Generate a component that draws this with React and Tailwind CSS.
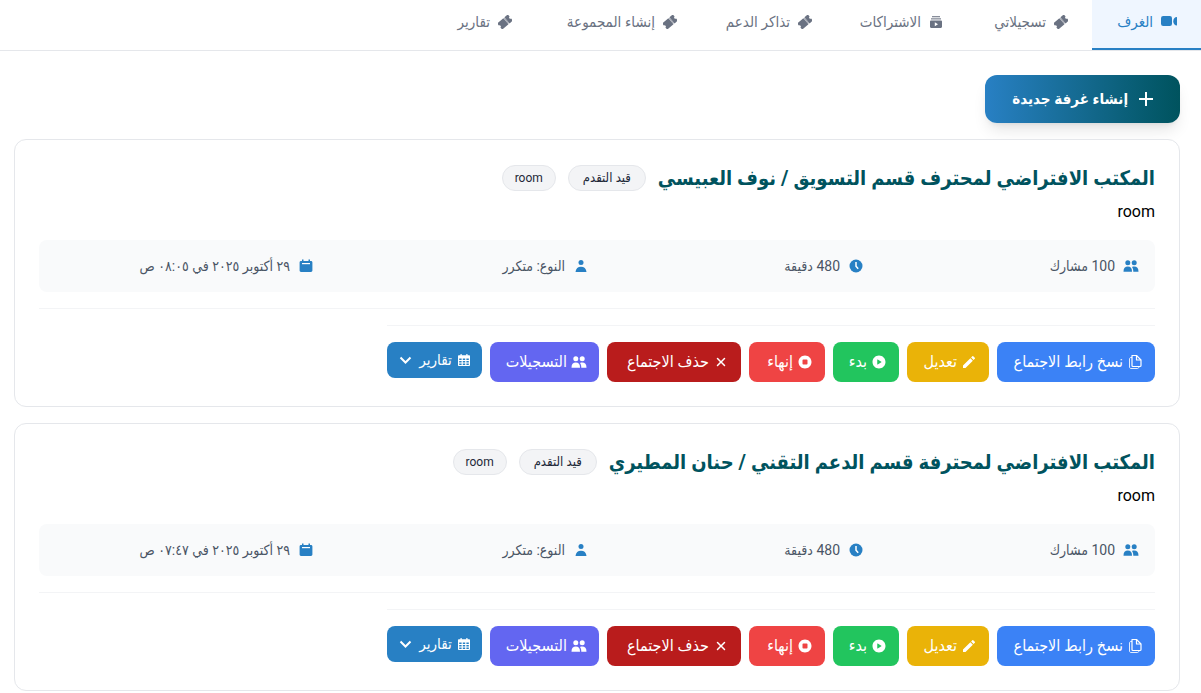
import { IoClose, IoPlayCircle, IoStopCircle } from 'react-icons/io5';
import { MdEdit } from 'react-icons/md';

const VideoIcon = ({ className }) => (
  <svg viewBox="0 0 16 16" fill="currentColor" className={className}>
    <rect x="0" y="2" width="11" height="10" rx="2.2" />
    <path d="M16 3v8.500c-2.400 0-3.700-1.600-3.700-4.200S13.600 3 16 3z" />
  </svg>
);

const TicketIcon = ({ className }) => (
  <svg viewBox="0 0 14 14" fill="currentColor" className={className}>
    <g transform="rotate(-40 7 7)">
      <path d="M0 3h8.200v8H0V8.200a1.200 1.200 0 0 0 0-2.400z" />
      <path d="M8.200 3.600h1.400v6.800H8.200z" opacity="0.6" />
      <path d="M9.600 3H14v2.800a1.200 1.200 0 0 0 0 2.400V11H9.600z" />
    </g>
  </svg>
);

const SubscriptionsIcon = ({ className }) => (
  <svg viewBox="0 0 14 14" fill="currentColor" className={className}>
    <rect x="3" y="1" width="8" height="1.300" opacity="0.8" />
    <rect x="2" y="3.200" width="10" height="1.300" opacity="0.8" />
    <path fillRule="evenodd" d="M2.200 5.400h9.600c.7 0 1.200.5 1.200 1.200v5.200c0 .7-.5 1.200-1.200 1.200H2.200C1.500 13 1 12.500 1 11.800V6.600c0-.7.5-1.200 1.200-1.200zM5.800 7.200v4L9 9.200z" />
  </svg>
);

const ClockIcon = ({ className }) => (
  <svg viewBox="0 0 16 16" className={className}>
    <circle cx="8" cy="8" r="6.500" fill="currentColor" />
    <path d="M8 4v4.200l2.200 2.600" fill="none" stroke="white" strokeWidth="1.500" />
  </svg>
);

const PeopleIcon = ({ className }) => (
  <svg viewBox="0 0 16 16" fill="currentColor" className={className}>
    <circle cx="4.800" cy="4.800" r="2.500" />
    <circle cx="11.200" cy="4.800" r="2.500" />
    <path d="M.5 13.700c0-3.600 1.500-5.200 4.300-5.200s4.200 1.600 4.200 5.200z" />
    <path d="M9 9c.6-.4 1.400-.5 2.200-.5 2.800 0 4.300 1.600 4.300 5.200h-5.200c0-1.900-.4-3.500-1.300-4.700z" />
  </svg>
);

const PersonIcon = ({ className }) => (
  <svg viewBox="0 0 16 16" fill="currentColor" className={className}>
    <circle cx="8" cy="4.500" r="2.500" />
    <path d="M2.500 14c.3-3.500 2.400-5.200 5.500-5.200s5.200 1.700 5.500 5.200z" />
  </svg>
);

const DateIcon = ({ className }) => (
  <svg viewBox="0 0 16 16" className={className}>
    <path d="M3 3h1V1.500h1.500V3h5V1.500H12V3h1c.8 0 1.400.6 1.400 1.400v8.200c0 .8-.6 1.400-1.400 1.400H3c-.8 0-1.400-.6-1.400-1.400V4.400C1.600 3.600 2.200 3 3 3z" fill="currentColor" />
    <rect x="4" y="5" width="8" height="1.200" fill="white" />
  </svg>
);

const CopyIcon = ({ className }) => (
  <svg viewBox="0 0 16 16" fill="none" stroke="currentColor" strokeLinejoin="round" className={className}>
    <path d="M5 1.500h4.500L14 6v5.500c0 .6-.4 1-1 1H6c-.6 0-1-.4-1-1z" strokeWidth="1.200" />
    <path d="M9.500 1.500V6H14" strokeWidth="1.200" />
    <path d="M5 3.500H4c-.8 0-1.500.6-1.500 1.400v8.200c0 .8.700 1.400 1.500 1.400h6.500c.8 0 1.300-.6 1.500-1.800" strokeWidth="1" opacity="0.85" />
  </svg>
);

const CalendarIcon = ({ className }) => (
  <svg viewBox="0 0 12 12" fill="currentColor" className={className}>
    <path fillRule="evenodd" d="M1 1.200h1.500V0h1.200v1.200h4.600V0h1.200v1.200H11c.6 0 1 .4 1 1V11c0 .6-.4 1-1 1H1c-.6 0-1-.4-1-1V2.200c0-.6.4-1 1-1zM1.200 4.400v1.500h2.400V4.400zm3.600 0v1.500h2.400V4.400zm3.600 0v1.500h2.400V4.400zM1.200 6.900v1.500h2.400V6.900zm3.600 0v1.500h2.400V6.900zm3.600 0v1.500h2.400V6.900zM1.200 9.400v1.500h2.400V9.400zm3.600 0v1.500h2.400V9.400zm3.600 0v1.500h2.400V9.400z" />
  </svg>
);

const PlusIcon = ({ className }) => (
  <svg viewBox="0 0 20 20" fill="none" stroke="currentColor" strokeWidth="2" className={className}>
    <path d="M10 3v14M3 10h14" />
  </svg>
);

const ChevronIcon = ({ className }) => (
  <svg viewBox="0 0 14 14" fill="none" stroke="currentColor" strokeWidth="2" className={className}>
    <path d="M1.500 4.500l5 5 5-5" />
  </svg>
);

const tabs = [
  { label: 'الغرف', icon: VideoIcon, width: 'w-[109px]', active: true },
  { label: 'تسجيلاتي', icon: TicketIcon, width: 'w-[125px]' },
  { label: 'الاشتراكات', icon: SubscriptionsIcon, width: 'w-[131px]' },
  { label: 'تذاكر الدعم', icon: TicketIcon, width: 'w-[135px]' },
  { label: 'إنشاء المجموعة', icon: TicketIcon, width: 'w-[165px]' },
  { label: 'تقارير', icon: TicketIcon, width: 'w-[100px]' },
];

const rooms = [
  { id: 1, title: 'المكتب الافتراضي لمحترف قسم التسويق / نوف العبيسي', date: '٢٩ أكتوبر ٢٠٢٥ في ٠٨:٠٥ ص' },
  { id: 2, title: 'المكتب الافتراضي لمحترفة قسم الدعم التقني / حنان المطيري', date: '٢٩ أكتوبر ٢٠٢٥ في ٠٧:٤٧ ص' },
];

const actions = [
  { label: 'نسخ رابط الاجتماع', icon: CopyIcon, style: 'w-[158px] bg-[#3b82f6]' },
  { label: 'تعديل', icon: MdEdit, style: 'w-[82px] bg-[#eab308]' },
  { label: 'بدء', icon: IoPlayCircle, style: 'w-[66px] bg-[#22c55e]' },
  { label: 'إنهاء', icon: IoStopCircle, style: 'w-[76px] bg-[#ef4444]' },
  { label: 'حذف الاجتماع', icon: IoClose, style: 'w-[134px] bg-[#b91c1c]' },
  { label: 'التسجيلات', icon: PeopleIcon, style: 'w-[109px] bg-[#6366f1]' },
];

function InfoItem({ icon: Icon, children }) {
  return (
    <div className="flex items-center gap-2 whitespace-nowrap">
      <Icon className="w-4 h-4 shrink-0 text-[#2880c4]" />
      <span>{children}</span>
    </div>
  );
}

function Badge({ className, children }) {
  return (
    <span className={`rounded-full border border-gray-200 bg-gray-100 px-3 py-1 text-center leading-4 text-gray-800 whitespace-nowrap ${className}`}>{children}</span>
  );
}

function RoomCard({ room }) {
  return (
    <article className="rounded-xl border border-gray-200 bg-white p-6">
      <div className="flex items-center gap-3">
        <h2 className="text-xl font-bold text-[#00535e] whitespace-nowrap">{room.title}</h2>
        <Badge className="min-w-[78px] text-[13px]">قيد التقدم</Badge>
        <Badge className="text-xs">room</Badge>
      </div>
      <p className="mt-2 text-base text-black">room</p>

      <div className="mt-4 grid grid-cols-4 gap-4 rounded-lg bg-gray-50 p-4 text-sm text-gray-600">
        <InfoItem icon={PeopleIcon}>100 مشارك</InfoItem>
        <InfoItem icon={ClockIcon}>480 دقيقة</InfoItem>
        <InfoItem icon={PersonIcon}>النوع: متكرر</InfoItem>
        <InfoItem icon={DateIcon}>{room.date}</InfoItem>
      </div>

      <div className="mt-4 flex border-t border-gray-100 pt-4">
        <div className="flex items-start gap-2 border-t border-gray-100 pt-4">
          {actions.map(({ label, icon: Icon, style }) => (
            <button key={label} type="button" className={`flex h-10 items-center gap-1 rounded-lg px-3 text-base text-white whitespace-nowrap ${style}`}>
              <Icon className="w-4 h-4 shrink-0" />
              {label}
            </button>
          ))}
          <button type="button" className="flex h-9 w-[95px] items-center justify-between rounded-lg bg-[#2880c4] px-3 text-[15px] text-white whitespace-nowrap">
            <CalendarIcon className="w-3 h-3 shrink-0" />
            تقارير
            <ChevronIcon className="w-3.5 h-3.5 shrink-0" />
          </button>
        </div>
      </div>
    </article>
  );
}

export default function App() {
  return (
    <div dir="rtl" className="min-h-screen bg-white font-[Roboto,'DejaVu_Sans_Condensed','DejaVu_Sans',sans-serif]">
      <nav className="flex border-b border-gray-200">
        {tabs.map(({ label, icon: Icon, width, active }) => (
          <a
            key={label}
            href="#"
            className={`flex items-center gap-2 border-b-2 px-6 pt-3 pb-4 text-[15px] leading-5 whitespace-nowrap ${width} ${active ? 'border-[#2880c4] bg-[#eff6ff] text-[#2880c4]' : 'border-transparent text-gray-500'}`}
          >
            <Icon className={active ? 'w-4 h-4 shrink-0' : 'w-3.5 h-3.5 shrink-0'} />
            {label}
          </a>
        ))}
      </nav>

      <main className="pt-6 pr-[21px] pl-[14px]">
        <button type="button" className="flex h-12 w-[195px] items-center gap-2 rounded-xl bg-linear-to-r from-[#2880c4] to-[#00535e] px-6 text-[15px] font-semibold text-white shadow-lg whitespace-nowrap">
          <PlusIcon className="w-5 h-5 shrink-0" />
          إنشاء غرفة جديدة
        </button>

        <div className="mt-4 space-y-4">
          {rooms.map((room) => <RoomCard key={room.id} room={room} />)}
        </div>
      </main>
    </div>
  );
}
